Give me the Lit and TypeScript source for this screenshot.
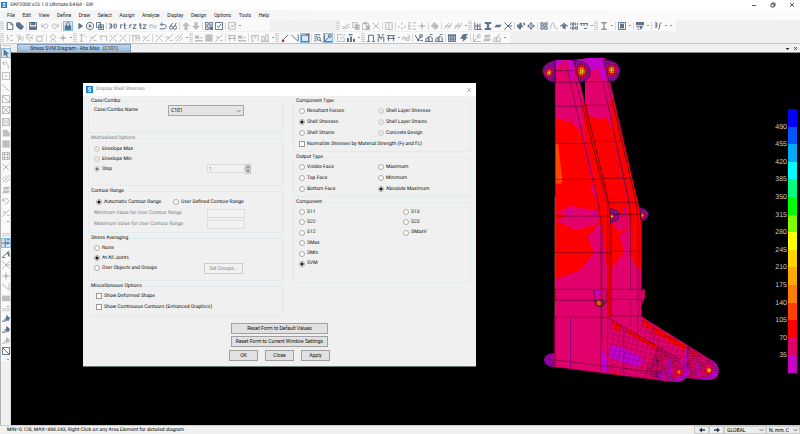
import { LitElement, html, svg, css, nothing, TemplateResult } from "lit";
import { customElement } from "lit/decorators.js";
import { classMap } from "lit/directives/class-map.js";

/* Icon glyphs on a 10 x 10 grid. "s" is a stroked path, "f" a filled one. */
type Glyph = { s?: string; f?: string };
const GLYPHS: Record<string, Glyph> = {
  page: { s: "M1.5 0.5H6L8.5 3V9.5H1.5ZM6 0.5V3H8.5" },
  tags: { f: "M0 1L4 0L10 6L7 10L5 9L4 9L0 5Z" },
  save: { s: "M0.5 0.5H9.5V9.5H0.5Z", f: "M2 0H8V4H2ZM1 5.5H9V9H1Z" },
  undo: { s: "M1 2V6H5M1 6C4 1 9 2 8.5 5C8 8 6 8.5 4 8.5" },
  redo: { s: "M9 2V6H5M9 6C6 1 1 2 1.5 5C2 8 4 8.5 6 8.5" },
  lock: { s: "M3 5V2.5C3 0 7 0 7 2.5V5", f: "M1 4.5H9V10H1Z" },
  play: { f: "M3 1L9 5L3 9Z" },
  playRing: { s: "M5 0.5A4.5 4.5 0 1 0 5.01 0.5Z", f: "M3.5 2.5L7.5 5L3.5 7.5Z" },
  copyPages: { s: "M0.5 0.5H5.5V6.5H0.5ZM3.5 3.5H9.5V9.5H3.5Z", f: "M5 5H8V8H5Z" },
  threeD: { s: "M0 2.5H3V7.5H0M1 5H3M4 5H5.5M6.5 2.5V7.5H8.5L9.5 5L8.5 2.5Z" },
  rt: { s: "M2 8V3.5H4.5M7 1V8H9M5.5 4H9" },
  rz: { s: "M1 8V3.5H3.5M5 3.5H9L5 8H9" },
  tz: { s: "M1.5 1V8H3.5M0 4H3.5M5 3.5H9L5 8H9" },
  nv: { s: "M1 8V3.5H4V8M5.5 3.5L7.5 8L9.5 3.5" },
  turn: { s: "M2 3H6C10 3 10 8.5 6 8.5H1M4 0.8L2 3L4 5.2" },
  glasses: { s: "M0.5 7A2 2 0 1 0 4.5 7A2 2 0 1 0 0.5 7M5.5 7A2 2 0 1 0 9.5 7A2 2 0 1 0 5.5 7M1.5 5L5 1M7 5L9 1" },
  up: { f: "M5 0L10 5H7V10H3V5H0Z" },
  down: { f: "M5 10L0 5H3V0H7V5H10Z" },
  blocks: { s: "M0.5 0.5H4V4H0.5ZM6 0.5H9.5V4H6ZM0.5 6H4V9.5H0.5Z", f: "M5.5 5.5H10V10H5.5Z" },
  check: { s: "M0.5 0.5H9.5V9.5H0.5ZM2.5 5L4.5 7L7.8 2.5" },
  boxed: { s: "M0.5 0.5H9V9H0.5ZM2 7L5 4L6 6L10 1" },
  cut: { s: "M0.5 7A1.3 1.3 0 1 0 3.1 7A1.3 1.3 0 1 0 0.5 7M3 6L10 2M4 8L10 6" },
  copy: { s: "M1 0.5H6V7H1Z", f: "M3.5 3H9.5V10H3.5Z" },
  paste: { s: "M0.5 1.5H8V9.5H0.5Z", f: "M2.5 0H6V3H2.5ZM4.5 4H10V10H4.5Z" },
  x: { s: "M1 1L9 9M9 1L1 9" },
  grid: { s: "M1 1V9M5 1V9M9 1V9M0.5 0.5H9.5M0.5 9.5H9.5" },
  dots: { f: "M0 5H2V7H0ZM4 1H6V3H4ZM4 7H6V9H4ZM8 5H10V7H8Z" },
  be: { s: "M1 1V9H4M1 5H4M1 1H4M6 1H10M6 5H9M6 9H10" },
  plus: { s: "M5 0.5V9.5M0.5 5H9.5", f: "M3.5 3.5H6.5V6.5H3.5Z" },
  diamond: { f: "M4 0L10 5L6 10L0 5Z" },
  slashes: { s: "M0.5 9L6 1M4.5 9L10 1M1 5H9" },
  frame: { s: "M1 0.5V9.5H10M1 5H7M4.5 2V9M7.5 2V9" },
  ibeam: { s: "M1.5 1H8.5M5 1V9M1.5 9H8.5" },
  ibeamBold: { f: "M1 0H9V2.5H6.5V7.5H9V10H1V7.5H3.5V2.5H1Z" },
  plate: { f: "M3 3.5H10L7 6.5H0Z" },
  joint: { s: "M0.5 0.5L9.5 9.5M9.5 0.5L0.5 9.5M5 5H10" },
  gear: { f: "M0 3H3V1H6V4H7V7H5V9H2V7H0ZM8 1H10V4H8Z" },
  move: { f: "M5 0L7.5 3H2.5ZM5 10L2.5 7H7.5ZM0 5L3 2.5V7.5ZM10 5L7 7.5V2.5ZM4 4H6V6H4Z" },
  cluster: { s: "M1 1H4V4H1ZM6 1H9V4H6ZM1 6H4V9H1ZM6 6H9V9H6ZM4 4L6 6" },
  wave: { s: "M0.5 8C3 -1 4 -1 5.5 5C6.5 9 8 8 10 8" },
  quake: { s: "M0 5H1.5L3 3L4 8L5 1L6 9L7 3L8.5 5H10" },
  nums: { s: "M1 1V4M3 1H5V4H3ZM7 1V4M9.3 1V4M1 6V9M3 6H5V9H3ZM7 6V9H9.3V6Z" },
  hooks: { s: "M0 2H10M1.5 2V5M5 2V5M5 8H9M9 2V5" },
  cell: { s: "M0.5 0.5H9.5V9.5H0.5Z", f: "M2.5 2H7.5V8H2.5Z" },
  sheet: { f: "M0 0H10V4H0ZM4 5H9L6 10Z", s: "M0.5 6H4M2 9H4" },
  curve: { s: "M1 1H3.5V4H1M3.5 4V6.5H1M5 9C9 9 5 1 9.5 1" },
  ruler: { s: "M0.5 9L4 5M2 1V6M5 3L9 1M5 8H9" },
  zig: { s: "M0.5 1L4 4L3 9M5 1V7L10 3M7 9L9.5 6" },
  tool: { s: "M1 1H6M1 1V5L6 9M6 5L9.5 1M4 4L9 6" },
  fence: { s: "M1 3H7.5V9H1ZM7.5 3L10 0.5" },
  pin: { s: "M5 0.5L8.5 4L5 7.5L1.5 4ZM1.5 10L4 7M6 7L9 10" },
  tee: { s: "M0.5 1H6M3 1V9M1 9H5M7 2L9.5 4" },
  line: { s: "M1 1L9 9" },
  diag: { s: "M0.5 9.5L9.5 0.5M1 4H5M6 8H9.5" },
  rect: { s: "M0.5 2.5H9.5V9M2.5 2.5V8" },
  cross: { s: "M0.5 9.5L9.5 0.5M1 1L4 4M6.5 6.5L9.5 9.5" },
  rails: { s: "M1 0.5V9.5M5 2V9M1 2H9M9 2V9M5 5L9 5" },
  hatch: { s: "M0 6L5 0.5M1 9.5L9 0.5M5 9.5L10 4" },
  base: { f: "M0 7.5H10V9.5H0ZM0 2H5V6H0Z", s: "M6 5L9.5 4" },
  table: { f: "M0 0.5H10V3H0Z", s: "M0.5 1V9.5H9.5V1M0.5 5H9.5M0.5 7.3H9.5M3.5 2V9.5M6.5 2V9.5" },
  tower: { s: "M1 9V3H4V9ZM6 9V1H9V9ZM0 9.5H10" },
  beam: { s: "M0 2H10M1 2V9M5 2V6M9 2V9M1 9H4" },
  node: { s: "M3 7L9 1" },
  select: { s: "M9 0.5V9.5M0.5 1L8 8.5" },
  window: { s: "M0.5 1.5H9.5V9.5H0.5ZM6 0.5H10V4" },
  zoomIn: { s: "M0.5 1H8M0.5 3.5H4M4 6A2 2 0 1 0 8 6A2 2 0 1 0 4 6M7.5 7.5L10 10M0.5 6H3M0.5 8.5H3" },
  axes: { s: "M0.5 0.5V9.5H10M0.5 9.5L6 4M5.5 2.5A1.8 1.8 0 1 0 9.1 2.5A1.8 1.8 0 1 0 5.5 2.5" },
  boxTick: { s: "M7 0.5H0.5V9.5H9V5M4 4L5.5 6L10 0.5" },
  bars: { f: "M0 5H2.5V10H0ZM3.7 3H6.2V10H3.7ZM7.5 6H10V10H7.5ZM2 0H7V1.5H2Z" },
  portal: { s: "M2 9.5V1.5H8V9.5M0 9.5H3.5M6.5 9.5H10" },
  portal2: { s: "M1.5 10V4H8.5V10M0 1H3V4M5 4V7M6 1H9" },
  portal3: { s: "M0 2H10M2 2V9M8 2V9M0 5.5H10" },
  nd: { s: "M1 8V4H4V8M9 1V8H6V4.5H9" },
  hook: { s: "M0 1L4 8L7 3M6 1H9V4H6ZM6 8H10", f: "M3 6H5V9H3Z" },
  hist: { s: "M0 9.5H10M1 9V6L4 4V9M5 9V3H7L9 5V9M6 0.5H9.5" },
  bolt: { f: "M4 0H10L7 4H10L3 10L4 6H0Z" },
  pointer: { f: "M2 0L9 6.2H6L7.5 9.5L5.6 10L4.3 7L2 9Z" },
  bend: { s: "M1 3C6 0 8 4 8 9.5M3 0.5L1 3L4 5" },
  dotBox: { s: "M0.5 0.5H9.5V9.5H0.5Z", f: "M4 4H6V6H4Z" },
  boxDiag: { s: "M0.5 0.5H9.5V9.5H0.5ZM0.5 0.5L9.5 9.5" },
  boxX: { s: "M0.5 0.5H9.5V9.5H0.5ZM0.5 0.5L9.5 9.5M9.5 0.5L0.5 9.5" },
  boxI: { s: "M0.5 0.5H9.5V9.5H0.5ZM2.5 0.5V9.5M7.5 0.5V9.5M5 3V7" },
  shape: { f: "M1 1H6L9.5 4.5V9.5H1Z" },
  square: { f: "M0.5 0.5H9.5V9.5H0.5Z" },
  mesh: { s: "M0.5 0.5H9.5V9.5H0.5ZM3 0.5V9.5M7 0.5V9.5M0.5 3H9.5M0.5 7H9.5" },
  layers: { f: "M3 1H10L8 4.5H1ZM2 5.5H10L8 9H0Z" },
  arc: { s: "M1 5C2 -1 10 3 8 6L4 9.5M1 2V5H4" },
  snap: { s: "M4 0V10M0 5H10", f: "M6 3L9.5 5L6 7.5ZM6.5 0H9V2H6.5Z" },
  ends: { s: "M0.5 9L9 1M0 9.5H4", f: "M6 3H9.5V9L7.5 7Z" },
  band: { f: "M0 2H10V9H0Z" },
  all: { s: "M0 9H4V5M6 9V3", f: "M5.5 1L10 5L8 9L5.5 7Z" },
  arrowL: { f: "M0 5L5 1V3.8H10V6.2H5V9Z" },
  arrowR: { f: "M10 5L5 1V3.8H0V6.2H5V9Z" },
};

const glyph = (name: string) => {
  const g = GLYPHS[name];
  return html`<svg class="glyph" viewBox="0 0 10 10" aria-hidden="true">
    ${g.f ? svg`<path class="fill" d=${g.f}></path>` : nothing}
    ${g.s ? svg`<path class="line" d=${g.s}></path>` : nothing}
    ${name === "node" ? svg`<rect x="1" y="7" width="3" height="3" fill="#d02020"></rect>` : nothing}
  </svg>`;
};

/* Tool strips. "~" grip, "|" wide gap, "!" narrow gap, "v" more arrow;
   a trailing "-" marks a greyed tool, "*" a pressed one. */
const TOP_FILE = "~ page tags | save ! undo- redo- | lock* ! play playRing copyPages | threeD rt rz tz nv- turn glasses | up- down- | blocks check | boxed- v";
const TOP_EDIT = "~ cut- copy- paste- x- | grid- | dots- be- plus- | diamond- | slashes- slashes- v ~ frame ibeamBold plate joint | gear move | cluster wave- quake nums hooks v ~ ibeam v | cell v | sheet v | curve v v";
const LOW_LEFT = "~ ruler- zig- tool- fence- | pin- plus- v ~ tee- diag- rect- cross- cross- | rails- diag- | cross- diag- hatch- v ~ base- square- diag- | portal3- base- | beam- tower- v ~ node select window* | zoomIn axes* | boxTick- bars v ~ portal portal2 portal3 v nd- | hook hist hist | table ! bolt | axes- layers- hist- v";
const RAIL: { cls: string; tools: string }[] = [
  { cls: "draw", tools: "~ pointer* bend- dotBox- line- boxDiag- boxX- boxI- shape- square- mesh- x- hatch- layers- arc- diag- v" },
  { cls: "snaps", tools: "~ snap* ends joint- plus- select- band- v" },
  { cls: "picks", tools: "~ all all all- boxDiag v" },
];

const strip = (spec: string) =>
  spec.split(" ").map((t): TemplateResult => {
    if (t === "~") return html`<span class="grip"></span>`;
    if (t === "|") return html`<span class="gap wide"></span>`;
    if (t === "!") return html`<span class="gap"></span>`;
    if (t === "v") return html`<button class="more" aria-label="More"></button>`;
    const name = t.replace(/[-*]$/, "");
    const state = { tool: true, off: t.endsWith("-"), on: t.endsWith("*") };
    return html`<button class=${classMap(state)} aria-label=${name}>${glyph(name)}</button>`;
  });

const logo = html`<svg class="logo" viewBox="0 0 12 12" aria-hidden="true">
  <rect width="12" height="12" fill="#1d7fd6"></rect>
  <path d="M9 3H4.2V5.6H8V9H3" fill="none" stroke="#fff" stroke-width="1.6"></path>
</svg>`;

const stripCss = css`
  button, input, select { font: inherit; color: inherit; margin: 0; padding: 0; box-sizing: border-box; }
  .glyph { display: block; width: 8px; height: 8px; }
  .fill { fill: #5c748c; }
  .line { fill: none; stroke: #566a80; stroke-width: 1.2; }
  .tool { width: 10px; height: 10px; border: 0; background: none; flex: none; display: grid; place-items: center; }
  .tool.off .fill { fill: #bdbdbd; }
  .tool.off .line { stroke: #a8a8a8; stroke-width: 1; }
  .tool.on { background: #d4e8f9; box-shadow: inset 0 0 0 1px #86bce8; }
  .more { width: 5px; height: 10px; border: 0; background: none; flex: none; display: grid; place-items: center; }
  .more::before { content: ""; border: 1px solid transparent; border-top-color: #333; border-bottom: 0; }
  .gap { flex: none; width: 2px; }
  .gap.wide { width: 3px; height: 8px; background: linear-gradient(90deg, transparent 1px, #d8d8d8 1px, #d8d8d8 2px, transparent 2px); }
  .grip { flex: none; width: 4px; margin-right: 1px; height: 9px; background: repeating-linear-gradient(#d4d4d4 0 1px, #eee 1px 2px); }
  .logo { display: block; width: 6px; height: 6px; flex: none; }
`;

/* ---------- contour legend ---------- */
const BANDS: [string, string][] = [
  ["#0000ff", "490"], ["#0055ff", "455"], ["#00aaff", "420"], ["#00ffff", "385"], ["#00ff80", "350"],
  ["#00ff00", "315"], ["#80ff00", "280"], ["#ffff00", "245"], ["#ffd500", "210"], ["#ffaa00", "175"],
  ["#ff8000", "140"], ["#ff4000", "105"], ["#ff0000", "70"], ["#e0006a", "35"], ["#c800c8", ""],
];

@customElement("contour-legend")
export class ContourLegend extends LitElement {
  static styles = css`
    :host { display: flex; flex-direction: column; font: 7px/8px "Liberation Sans", Arial, sans-serif; color: #ccc; }
    .band { flex: 1; display: flex; align-items: flex-end; justify-content: flex-end; gap: 1px; }
    .value { margin-bottom: -5px; }
    .swatch { width: 9px; height: 100%; }
  `;
  render() {
    return BANDS.map(
      ([color, value]) => html`<div class="band"><span class="value">${value}</span><span class="swatch" style="background:${color}"></span></div>`
    );
  }
}

/* ---------- shell model ---------- */
const PINK = "#e2006c", RED = "#ff0000", PURPLE = "#c400cc";

/* A domed lug with a hot spot at (hx, hy); the outline is given as a path. */
const lug = (outline: string, hx: number, hy: number, r: number) => svg`
  <g>
    <path d=${outline} fill="#9a0aa4"></path>
    <ellipse cx=${hx} cy=${hy} rx=${r * 1.3} ry=${r * 1.5} fill="#d0005c"></ellipse>
    <ellipse cx=${hx} cy=${hy} rx=${r * 0.95} ry=${r * 1.15} fill="#f01800"></ellipse>
    <ellipse cx=${hx} cy=${hy} rx=${r * 0.6} ry=${r * 0.8} fill="#ff7a10"></ellipse>
    <ellipse cx=${hx} cy=${hy} rx=${r * 0.3} ry=${r * 0.4} fill="#f0e020"></ellipse>
    <path d=${outline} fill="url(#fine)" stroke="#40103c" stroke-width="2"></path>
  </g>`;

@customElement("shell-model")
export class ShellModel extends LitElement {
  static styles = css`
    :host { display: block; }
    .model { display: block; width: 100%; height: 100%; }
    .edges { fill: none; stroke: #300018; stroke-width: 2; stroke-opacity: 0.75; }
    .edges.soft { stroke-opacity: 0.45; stroke-width: 1.5; }
  `;
  render() {
    return html`<svg class="model" viewBox="0 12 600 1008" role="img" aria-label="Stress contours on shell model">
      <defs>
        <pattern id="fine" width="7" height="7" patternUnits="userSpaceOnUse" patternTransform="rotate(8)">
          <path d="M0 0H7M0 0V7" stroke="#200020" stroke-opacity=".7" stroke-width="2" fill="none"></path>
        </pattern>
        <pattern id="coarse" width="15" height="15" patternUnits="userSpaceOnUse" patternTransform="rotate(14)">
          <path d="M0 0H15M0 0V15" stroke="#300018" stroke-opacity=".6" stroke-width="2" fill="none"></path>
        </pattern>
      </defs>

      <!-- rear column -->
      <path fill=${PINK} d="M165 96L130 30L180 24H225L240 92L322 450L335 500V800L340 810H165Z"></path>
      <path fill=${PURPLE} d="M130 30L180 24H220L226 55L165 60V92L150 60Z"></path>
      <path fill=${PURPLE} d="M206 60L226 58L230 92L218 90Z"></path>
      <path fill=${RED} d="M165 192L206 207L232 204L248 250L240 150L250 150L322 450L335 500V660L315 645L302 610V530L267 558L283 605L243 657L200 480L165 300Z"></path>
      <path fill="#c01050" d="M250 255L298 450L302 510L290 440L246 250Z"></path>
      <path fill="#e00060" d="M250 495L270 490L295 494L300 530L267 545L245 520Z"></path>
      ${lug("M219 28Q240 30 258 38Q270 48 270 62Q268 82 254 92L236 96Z", 245, 60, 13)}

      <!-- rear leg -->
      <path fill=${PINK} d="M243 805L333 798L545 930Q568 945 566 965Q562 990 535 990L470 984L240 930Z"></path>
      <path fill=${PURPLE} d="M545 930Q568 945 566 965Q562 990 535 990L490 986Q540 985 552 960Q555 945 540 930Z"></path>
      <path fill=${RED} d="M340 805L368 828L355 840L340 826ZM370 828L475 892L470 906L372 848ZM480 900L497 905L493 924Z"></path>
      <path fill=${PURPLE} d="M465 890L473 893V935L465 930ZM500 940L510 942V980L500 978Z"></path>
      <path fill="url(#coarse)" d="M333 798L480 890L480 984L330 850Z"></path>
      <path fill="url(#fine)" d="M470 884L545 930Q568 945 566 965Q562 990 535 990L470 984Z"></path>
      <ellipse cx="536" cy="962" rx="9" ry="10" fill=${RED}></ellipse>
      <ellipse cx="537" cy="961" rx="6" ry="6" fill="#e0b020"></ellipse>

      <!-- front column -->
      <path fill="#000" d="M150 98H165V165Z"></path>
      <path fill=${PINK} d="M75 30H130L150 96L237 460L243 520V802H233L75 802Z"></path>
      <path fill=${PURPLE} d="M77 30H102L77 52ZM113 30H128L134 92L124 90Z"></path>
      <path fill=${RED} d="M75 203L125 217L155 250L165 290L184 392L190 400L182 415L208 470L213 500V520L207 520L140 540L75 520Z"></path>
      <path fill=${RED} d="M157 160L167 160L237 460L243 520V800H240L230 640L214 520L205 460L160 230Z"></path>
      <path fill=${RED} d="M75 520L140 540L207 520L172 560L192 608L150 660L77 687Z"></path>
      <path fill=${PINK} d="M77 487L125 467L188 480L213 500L112 498Z"></path>
      <path fill=${PINK} d="M77 512L110 498H212L200 522L140 540Z"></path>
      <path fill="#ff4800" d="M77 275L84 280L97 390L93 402L77 400Z"></path>
      <path fill="#e06030" d="M74 440H77V800H74Z"></path>
      <path fill="#b000c0" d="M118 478H125V498H118ZM193 478H200V498H193ZM282 473H288V492H282Z"></path>
      ${lug("M75 30L55 38Q37 48 38 64Q40 84 58 92L76 97Z", 57, 68, 10)}
      ${lug("M130 30L160 36Q180 48 181 64Q180 84 166 92L148 97Z", 155, 64, 15)}

      <!-- collar -->
      <path fill=${PINK} d="M75 718H345V740L338 760L330 750H75Z"></path>
      <path fill=${PURPLE} d="M193 720H214L198 748Z"></path>
      <path class="edges" d="M75 718H345V745L335 758M75 751H200M228 748H335M193 720V750L198 765M228 720V760"></path>
      <ellipse cx="210" cy="759" rx="15" ry="12" fill="#602030"></ellipse>
      <ellipse cx="208" cy="759" rx="8" ry="7" fill="#f05a00"></ellipse>
      ${lug("M238 474L258 480L268 490L264 508L240 520Z", 245, 499, 7)}
      ${lug("M328 472L346 478L356 488L352 504L334 514Z", 336, 496, 7)}
      <path fill=${RED} d="M232 470H240V520H232ZM322 470H330V520H322Z"></path>

      <!-- foot and front leg -->
      <path d="M75 909Q42 910 42 930Q44 950 75 952Z" fill="#a800b4"></path>
      <path d="M75 909Q42 910 42 930Q44 950 75 952Z" fill="url(#fine)"></path>
      <path fill=${PINK} d="M73 800H233L450 928Q478 940 478 960Q474 996 440 995L400 993L73 951Z"></path>
      <path fill=${PURPLE} d="M450 928Q478 940 478 960Q474 996 440 995L405 992Q450 990 464 965Q466 945 444 926Z"></path>
      <path fill=${RED} d="M248 812L276 828L262 845L248 832ZM292 836L382 888L380 900L294 850ZM398 906L410 916L402 928ZM250 966L280 972L250 975ZM232 640H242V802H235Z"></path>
      <path fill=${PURPLE} d="M240 888L270 890L325 915L340 935L320 950L285 940L240 922ZM118 802H126V955H118ZM213 890L232 930V966L214 962ZM413 925H422V990H413Z"></path>
      <path fill=${PURPLE} d="M385 965H400V990H385Z"></path>
      <path fill="url(#coarse)" d="M240 806L395 897L395 990L240 970Z"></path>
      <path fill="url(#fine)" d="M382 890L450 928Q478 940 478 960Q474 996 440 995L340 982Z"></path>
      <ellipse cx="446" cy="967" rx="8" ry="9" fill=${RED}></ellipse>
      <ellipse cx="447" cy="966" rx="4" ry="5" fill="#e08020"></ellipse>

      <!-- edges -->
      <path class="edges" d="M75 30V950M75 62H130M75 97H150M75 169H160M75 280H188M75 388H212M75 498H240M75 608H243M75 802H233L450 928M165 95H235M165 166H245M190 274H280M220 385H308M235 458H320M240 493H335M243 604H335M243 798H333L545 930M113 62L205 460L213 520V962M138 95L233 460V970M150 96L237 460L243 520V802M218 92L296 450L302 500V718M232 92L318 455L323 500V850M240 92L325 450L335 520V798M281 832V972M382 888V985M370 828V880M473 890V960M75 930L390 968M75 951L400 993M122 802V955"></path>
      <path class="edges soft" d="M162 160L226 460M168 170L240 480M246 150L322 470M250 150L328 470M217 520V870M238 520V802M328 520V790M302 750V830M238 812L455 942M330 808L545 942"></path>
    </svg>`;
  }
}

/* ---------- dialog ---------- */
type Opt = { text: string; on?: boolean; off?: boolean };

@customElement("stress-dialog")
export class StressDialog extends LitElement {
  static styles = [
    stripCss,
    css`
      :host { display: block; background: #f0f0f0; color: #111; font: 5px/7px Roboto, "Noto Sans", sans-serif; text-rendering: geometricPrecision; border-bottom: 1px solid #6c7474; }
      .title { display: flex; align-items: center; gap: 3px; height: 13px; padding: 0 4px 0 3px; background: #fff; color: #888; border-bottom: 1px solid #f0f0f0; }
      .title .logo { width: 7px; height: 7px; }
      .close { margin-left: auto; width: 6px; height: 6px; border: 0; background: none; }
      .close svg { display: block; }
      .groups { display: grid; grid-template-columns: 195fr 178fr; gap: 10px; padding: 1px 5px 0; }
      .column { display: flex; flex-direction: column; gap: 2px; }
      fieldset { margin: 0; padding: 0; border: 1px solid #e0ebee; box-sizing: border-box; min-width: 0; }
      legend { padding: 0 1px; margin-left: 1px; height: 7px; }
      .h33 { min-height: 33px; } .h35 { min-height: 35px; } .h43 { min-height: 43px; } .h45 { min-height: 45px; }
      .h46 { min-height: 46px; } .h51 { min-height: 51px; } .h54 { min-height: 54px; } .h84 { min-height: 84px; }
      .rows { display: grid; grid-auto-rows: 10px; align-items: center; padding: 2px 5px 0; }
      .tight { padding-top: 1px; }
      .loose { row-gap: 1px; }
      .inset { padding-left: 7px; }
      .half { grid-template-columns: 79px 1fr; }
      .far { grid-template-columns: 104px 1fr; align-content: space-between; height: 62px; }
      .combo { grid-template-columns: 74px 76px; grid-auto-rows: 11px; padding-top: 0; }
      .entry { grid-template-columns: 113px 44px; }
      .contour { grid-template-columns: 77px 1fr; }
      .sub { grid-column: 1 / -1; display: grid; grid-template-columns: 113px 38px; margin-left: -2px; align-items: center; }
      .all { grid-column: 1 / -1; }
      .opt { display: flex; align-items: center; gap: 2px; white-space: nowrap; }
      .dim { color: #808080; }
      input[type="radio"], input[type="checkbox"] { appearance: none; width: 6px; height: 6px; flex: none; border: 1px solid #999; background: #fff; }
      input[type="radio"] { border-radius: 50%; border-color: #aaa; }
      input[type="radio"]:disabled { background: #e8e8e8; border-color: #ccc; }
      input[type="radio"]:checked { background: radial-gradient(circle, #111 1px, #fff 2px); }
      input[type="radio"]:checked:disabled { background: radial-gradient(circle, #777 1px, #eee 2px); }
      .field { width: 38px; height: 9px; border: 1px solid #dcdcdc; background: #f2f2f2; padding: 0 1px; line-height: 7px; color: #888; }
      .pick { position: relative; display: grid; }
      select { appearance: none; width: 100%; height: 11px; border: 1px solid #a8a8a8; background: #e4e4e4; padding: 0 2px; border-radius: 0; }
      .pick svg { position: absolute; right: 3px; top: 4px; pointer-events: none; }
      .spin { display: flex; }
      .keys { display: grid; width: 6px; }
      .keys button { width: 6px; height: 5px; border: 1px solid #c4c4c4; background: #f0f0f0; display: grid; place-items: center; }
      .keys svg { display: block; }
      .push { border: 1px solid #a0a0a0; background: #e1e1e1; height: 11px; line-height: 9px; border-radius: 0; white-space: nowrap; }
      .push:disabled { border-color: #ccc; background: #f2f2f2; color: #909090; }
      .groupsBtn { width: 39px; margin-left: -3px; align-self: center; }
      .foot { display: grid; justify-content: center; justify-items: center; gap: 2px; padding: 7px 0 5px; }
      .wideBtn { width: 97px; }
      .trio { display: flex; gap: 7px; padding-top: 1px; }
      .trio .push { width: 29px; }
    `,
  ];

  private radio(name: string, o: Opt) {
    return html`<label class="opt"><input type="radio" name=${name} ?checked=${o.on} ?disabled=${o.off} />${o.text}</label>`;
  }

  render() {
    const r = (name: string, text: string, on = false, off = false) => this.radio(name, { text, on, off });
    return html`
      <header class="title">${logo}<span>Display Shell Stresses</span>
        <button class="close" aria-label="Close window"><svg width="6" height="6" viewBox="0 0 6 6"><path d="M1 1L5 5M5 1L1 5" stroke="#999" stroke-width=".7"></path></svg></button>
      </header>
      <div class="groups">
        <div class="column">
          <fieldset class="h35"><legend>Case/Combo</legend>
            <div class="rows combo">
              <label for="case">Case/Combo Name</label>
              <div class="pick"><select id="case"><option>C101</option></select>
                <svg width="5" height="4" viewBox="0 0 5 4"><path d="M.5 1L2.5 3L4.5 1" fill="none" stroke="#777" stroke-width=".8"></path></svg></div>
            </div>
          </fieldset>
          <fieldset class="h51"><legend class="dim">Multivalued Options</legend>
            <div class="rows entry">
              <div class="all">${r("multi", "Envelope Max", false, true)}</div>
              <div class="all">${r("multi", "Envelope Min", false, true)}</div>
              ${r("multi", "Step", true, true)}
              <div class="spin"><input class="field" aria-label="Step number" value="1" disabled />
                <span class="keys">
                  <button aria-label="Increase"><svg width="4" height="3" viewBox="0 0 4 3"><path d="M0 2.5L2 .5L4 2.5Z" fill="#555"></path></svg></button>
                  <button aria-label="Decrease"><svg width="4" height="3" viewBox="0 0 4 3"><path d="M0 .5L2 2.5L4 .5Z" fill="#555"></path></svg></button>
                </span></div>
            </div>
          </fieldset>
          <fieldset class="h45"><legend>Contour Range</legend>
            <div class="rows contour loose inset">
              ${r("range", "Automatic Contour Range", true)}${r("range", "User Defined Contour Range")}
              <div class="sub"><label class="dim" for="min">Minimum Value for User Contour Range</label><input class="field" id="min" disabled /></div>
              <div class="sub"><label class="dim" for="max">Maximum Value for User Contour Range</label><input class="field" id="max" disabled /></div>
            </div>
          </fieldset>
          <fieldset class="h46"><legend>Stress Averaging</legend>
            <div class="rows entry tight">
              <div class="all">${r("avg", "None")}</div>
              <div class="all">${r("avg", "At All Joints", true)}</div>
              ${r("avg", "Over Objects and Groups")}
              <button class="push groupsBtn" disabled>Set Groups...</button>
            </div>
          </fieldset>
          <fieldset class="h33"><legend>Miscellaneous Options</legend>
            <div class="rows tight loose inset">
              <label class="opt"><input type="checkbox" />Show Deformed Shape</label>
              <label class="opt"><input type="checkbox" />Show Continuous Contours (Enhanced Graphics)</label>
            </div>
          </fieldset>
        </div>
        <div class="column">
          <fieldset class="h54"><legend>Component Type</legend>
            <div class="rows tight half loose">
              ${r("type", "Resultant Forces")}${r("type", "Shell Layer Stresses", false, true)}
              ${r("type", "Shell Stresses", true)}${r("type", "Shell Layer Strains", false, true)}
              ${r("type", "Shell Strains")}${r("type", "Concrete Design", false, true)}
              <label class="opt all"><input type="checkbox" />Normalize Stresses by Material Strength (Fy and f'c)</label>
            </div>
          </fieldset>
          <fieldset class="h43"><legend>Output Type</legend>
            <div class="rows tight half loose">
              ${r("out", "Visible Face")}${r("out", "Maximum")}
              ${r("out", "Top Face")}${r("out", "Minimum")}
              ${r("out", "Bottom Face")}${r("out", "Absolute Maximum", true)}
            </div>
          </fieldset>
          <fieldset class="h84"><legend>Component</legend>
            <div class="rows tight far">
              ${r("comp", "S11")}${r("comp", "S13")}
              ${r("comp", "S22")}${r("comp", "S23")}
              ${r("comp", "S12")}${r("comp", "SMaxV")}
              <div class="all">${r("comp", "SMax")}</div>
              <div class="all">${r("comp", "SMin")}</div>
              <div class="all">${r("comp", "SVM", true)}</div>
            </div>
          </fieldset>
        </div>
      </div>
      <div class="foot">
        <button class="push wideBtn">Reset Form to Default Values</button>
        <button class="push wideBtn">Reset Form to Current Window Settings</button>
        <div class="trio"><button class="push">OK</button><button class="push">Close</button><button class="push">Apply</button></div>
      </div>`;
  }
}

/* ---------- application window ---------- */
const MENUS = ["File", "Edit", "View", "Define", "Draw", "Select", "Assign", "Analyze", "Display", "Design", "Options", "Tools", "Help"];

@customElement("app-root")
export class AppRoot extends LitElement {
  static styles = [
    stripCss,
    css`
      :host { display: flex; flex-direction: column; height: 100vh; overflow: hidden; background: #f0f0f0; color: #222; font: 5px/7px Roboto, "Noto Sans", sans-serif; text-rendering: geometricPrecision; }
      .title { display: flex; align-items: center; gap: 3px; height: 10px; padding: 0 5px 0 1px; background: #fff; }
      .sys { display: flex; gap: 13px; margin-left: auto; }
      .sys button { width: 6px; height: 6px; border: 0; background: none; }
      .sys svg, .docs svg { display: block; fill: none; stroke: #333; stroke-width: 0.8; }
      .menu { height: 10px; padding-left: 7px; background: linear-gradient(90deg, #f4f4f4, #fcfcfc); }
      .items { display: flex; justify-content: space-between; align-items: center; width: 262px; height: 10px; }
      .menu button { border: 0; background: none; }
      .bar { display: flex; align-items: center; height: 11px; }
      .bar.second { margin-top: 1px; }
      .strip { display: flex; align-items: center; background: #fafafa; height: 11px; padding-right: 3px; }
      .first { padding-right: 28px; margin-right: 66px; }
      .work { flex: 1; min-height: 0; display: grid; grid-template-columns: 11px 1fr; }
      .rail { border-left: 1px solid #b4b4b4; border-right: 1px solid #ddd; box-sizing: border-box; }
      .set { display: flex; flex-direction: column; justify-content: space-between; align-items: center; background: #fafafa; }
      .set .grip { width: 8px; height: 4px; margin: 0; }
      .set .more { height: 4px; width: 4px; align-self: flex-end; }
      .draw { height: 190px; }
      .draw .more { margin-bottom: 10px; }
      .snaps { height: 75px; }
      .picks { height: 53px; }
      .view { display: flex; flex-direction: column; min-width: 0; }
      .docs { display: flex; align-items: flex-end; height: 10px; border-top: 1px solid #c4c4c4; border-bottom: 1px solid #888; box-sizing: border-box; padding: 0 2px 0 6px; }
      .tab { width: 114px; height: 8px; border: 1px solid #7f9cbc; border-bottom: 0; border-radius: 1px 1px 0 0; background: linear-gradient(#c2d8ee, #93b5da); color: #1c2c40; line-height: 7px; white-space: pre; }
      .ctl { margin-left: auto; display: flex; align-items: center; gap: 3px; height: 8px; }
      .ctl button { width: 5px; height: 5px; border: 0; background: none; }
      .canvas { flex: 1; position: relative; background: #000; overflow: hidden; }
      shell-model { position: absolute; left: 519px; top: 1px; width: 200px; height: 336px; }
      contour-legend { position: absolute; right: 3px; top: 56px; height: 264px; }
      stress-dialog { position: absolute; left: 72px; top: 30px; width: 393px; }
      .status { display: flex; align-items: center; height: 9px; border-top: 1px solid #ccc; box-sizing: border-box; padding-left: 7px; color: #000; }
      .fields { margin-left: auto; display: flex; }
      .nav { width: 15px; height: 8px; border: 1px solid #ccc; background: #eee; display: grid; place-items: center; }
      .nav .glyph { width: 6px; height: 6px; }
      .nav .fill { fill: #26384c; }
      .pick { position: relative; }
      .pick select { appearance: none; height: 8px; border: 1px solid #ccc; background: #ececec; border-radius: 0; padding: 0 2px; line-height: 6px; }
      .pick svg { position: absolute; right: 2px; top: 2px; pointer-events: none; }
      .axis { width: 42px; } .units { width: 34px; }
    `,
  ];

  render() {
    const chevron = html`<svg width="5" height="4" viewBox="0 0 5 4"><path d="M.5 1L2.5 3L4.5 1" fill="none" stroke="#555" stroke-width=".8"></path></svg>`;
    return html`
      <header class="title">${logo}<span>SAP2000 v23.1.0 Ultimate 64-bit - SW</span>
        <div class="sys">
          <button aria-label="Minimize"><svg width="6" height="6" viewBox="0 0 6 6"><path d="M1 3.5H5"></path></svg></button>
          <button aria-label="Restore"><svg width="6" height="6" viewBox="0 0 6 6"><path d="M1 2H4V5H1ZM2 2V1H5V4H4"></path></svg></button>
          <button aria-label="Close"><svg width="6" height="6" viewBox="0 0 6 6"><path d="M1 1L5 5M5 1L1 5"></path></svg></button>
        </div>
      </header>
      <nav class="menu"><div class="items">${MENUS.map((m) => html`<button>${m}</button>`)}</div></nav>
      <div class="bar"><div class="strip first">${strip(TOP_FILE)}</div><div class="strip">${strip(TOP_EDIT)}</div></div>
      <div class="bar second"><div class="strip">${strip(LOW_LEFT)}</div></div>
      <div class="work">
        <aside class="rail">${RAIL.map((s) => html`<div class="set ${s.cls}">${strip(s.tools)}</div>`)}</aside>
        <main class="view">
          <div class="docs"><button class="tab">Stress SVM Diagram - Abs Max   (C101)</button>
            <div class="ctl">
              <button aria-label="Windows"><svg width="5" height="5" viewBox="0 0 5 5"><path d="M.5 2H4.5L2.5 4Z" fill="#222" stroke="none"></path></svg></button>
              <button aria-label="Close diagram"><svg width="5" height="5" viewBox="0 0 5 5"><path d="M1 1L4 4M4 1L1 4"></path></svg></button>
            </div>
          </div>
          <div class="canvas">
            <shell-model></shell-model>
            <contour-legend></contour-legend>
            <stress-dialog></stress-dialog>
          </div>
        </main>
      </div>
      <footer class="status"><span>MIN=0.128, MAX=488.343, Right Click on any Area Element for detailed diagram</span>
        <div class="fields">
          <button class="nav" aria-label="Previous">${glyph("arrowL")}</button>
          <button class="nav" aria-label="Next">${glyph("arrowR")}</button>
          <div class="pick"><select class="axis" aria-label="Coordinate system"><option>GLOBAL</option></select>${chevron}</div>
          <div class="pick"><select class="units" aria-label="Units"><option>N, mm, C</option></select>${chevron}</div>
        </div>
      </footer>`;
  }
}
